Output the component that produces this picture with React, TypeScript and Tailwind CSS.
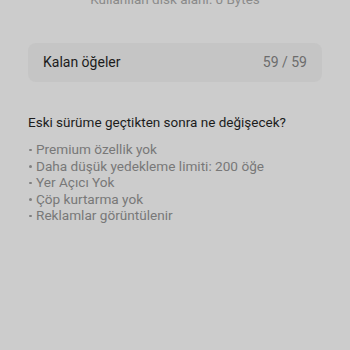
import React from "react";

export default function App() {
  const items = [
    "Premium özellik yok",
    "Daha düşük yedekleme limiti: 200 öğe",
    "Yer Açıcı Yok",
    "Çöp kurtarma yok",
    "Reklamlar görüntülenir",
  ];
  return (
    <div
      className="w-[350px] h-[350px] overflow-hidden bg-[#cccccc]"
      style={{ fontFamily: "Roboto, 'Noto Sans', sans-serif" }}
    >
      <div className="mt-[-11px] h-[20px] text-center text-[13.5px] leading-[20px] text-[#8a8a8a]">
        Kullanılan disk alanı: 0 Bytes
      </div>
      <div className="mx-[28px] mt-[34px] h-[39px] rounded-[8px] bg-[#c5c5c5] pl-[15px] pr-[15px] flex items-center justify-between">
        <span className="text-[14px] text-[#1c1c1c]">Kalan öğeler</span>
        <span className="text-[14px] text-[#6c6c6c]">59 / 59</span>
      </div>
      <div className="mx-[28px] mt-[30px] text-[13.5px] leading-[20px] text-[#1c1c1c]">
        Eski sürüme geçtikten sonra ne değişecek?
      </div>
      <ul className="ml-[29px] mt-[9px] text-[13.6px] leading-[16.5px] text-[#787878]">
        {items.map((t) => (
          <li key={t} className="flex items-center">
            <span className="w-[2.5px] h-[2.5px] rounded-full bg-[#808080] mr-[4.5px] mt-[1px]" />
            <span>{t}</span>
          </li>
        ))}
      </ul>
    </div>
  );
}
